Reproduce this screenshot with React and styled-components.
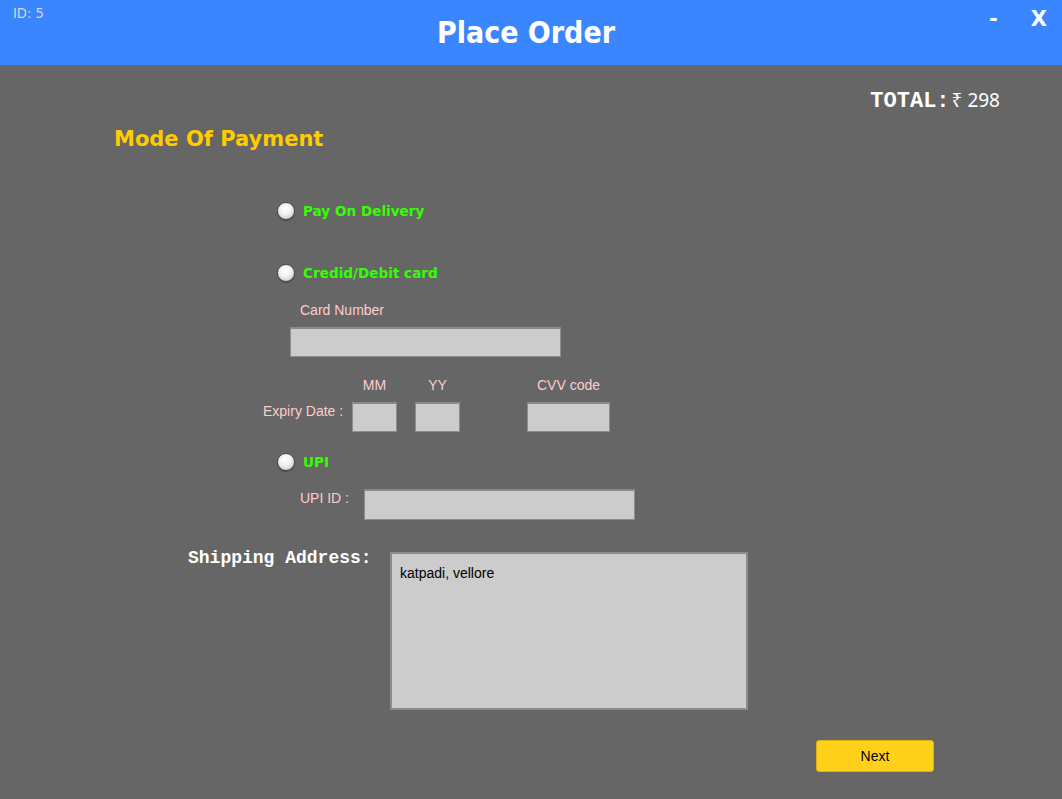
import React, { useState } from 'react'
import styled, { createGlobalStyle } from 'styled-components'

const GlobalStyle = createGlobalStyle`
  html, body { margin: 0; padding: 0; background: #666666; }
  body { font-family: "Liberation Sans", Arial, sans-serif; }
`

const Page = styled.div`
  width: 1062px;
  height: 799px;
  background: #666666;
  display: flex;
  flex-direction: column;
  overflow: hidden;
`

const Header = styled.div`
  height: 65px;
  background: #3a86ff;
  display: grid;
  grid-template-columns: 1fr auto 1fr;
  align-items: start;
`

const UserId = styled.div`
  font-family: "DejaVu Sans Condensed", "DejaVu Sans", sans-serif;
  font-size: 14.5px;
  color: #d6d6d6;
  padding: 5px 0 0 13px;
`

const Title = styled.h1`
  margin: 0;
  padding: 15px 10px 0 0;
  font-family: "DejaVu Sans Condensed", "DejaVu Sans", Verdana, sans-serif;
  font-weight: bold;
  font-size: 30px;
  line-height: 35px;
  color: #ffffff;
`

const WindowControls = styled.div`
  display: flex;
  justify-content: flex-end;
  gap: 33px;
  padding: 7px 15px 0 0;
`

const ControlBtn = styled.span`
  font-family: "DejaVu Sans", sans-serif;
  font-weight: bold;
  font-size: 21px;
  color: #ffffff;
  cursor: pointer;
`

const TotalRow = styled.div`
  display: flex;
  justify-content: flex-end;
  align-items: baseline;
  gap: 2px;
  padding-right: 62px;
  margin-top: 22px;
  height: 22px;
`

const TotalLabel = styled.span`
  font-family: "Liberation Mono", "Courier New", monospace;
  font-weight: bold;
  font-size: 22px;
  color: #ffffff;
`

const TotalValue = styled.span`
  font-family: "Noto Sans", "DejaVu Sans", sans-serif;
  font-size: 19px;
  color: #ffffff;
`

const SectionTitle = styled.h2`
  margin: 18px 0 0 114px;
  font-family: "DejaVu Sans", Verdana, sans-serif;
  font-weight: bold;
  font-size: 21px;
  line-height: 24px;
  color: #ffcc00;
`

const Option = styled.label`
  display: flex;
  align-items: center;
  gap: 8px;
  margin: ${p => p.$top}px 0 0 277px;
  height: 20px;
  cursor: pointer;
`

const Radio = styled.span`
  width: 18px;
  height: 18px;
  border-radius: 50%;
  box-sizing: border-box;
  border: 1px solid #4e4e52;
  background: radial-gradient(circle at 45% 35%, #ffffff 0%, #eef0f3 45%, #b4b8bf 100%);
  box-shadow: 0 1px 1px rgba(0, 0, 0, 0.3);
`

const OptionText = styled.span`
  font-family: "DejaVu Sans", Tahoma, sans-serif;
  font-weight: bold;
  font-size: 13.6px;
  color: #33ff00;
`

const FieldLabel = styled.span`
  font-family: "Liberation Sans", Arial, sans-serif;
  font-size: 14px;
  line-height: 16px;
  color: #ffcccc;
  white-space: nowrap;
`

const CardBlock = styled.div`
  display: flex;
  flex-direction: column;
  align-items: flex-start;
  gap: 9px;
  margin: 19px 0 0 290px;
  & > span { margin-left: 10px; }
`

const TextInput = styled.input`
  width: ${p => p.$w}px;
  height: ${p => p.$h || 30}px;
  box-sizing: border-box;
  background: #cccccc;
  border: 1px solid #8e8e8e;
  border-top: 2px solid #8a8a8a;
  padding: 0 6px;
  font-family: "Liberation Sans", Arial, sans-serif;
  font-size: 14px;
  outline: none;
`

const ExpiryGrid = styled.div`
  display: grid;
  grid-template-columns: 89px 45px 18px 45px 67px 83px;
  grid-template-rows: 16px 30px;
  row-gap: 9px;
  justify-content: start;
  margin: 20px 0 0 263px;
`

const Cell = styled.div`
  grid-column: ${p => p.$col};
  grid-row: ${p => p.$row};
  display: flex;
  justify-content: ${p => (p.$start ? 'flex-start' : 'center')};
  align-items: flex-start;
  padding-top: ${p => p.$pt || 0}px;
`

const UpiRow = styled.div`
  display: flex;
  align-items: flex-start;
  gap: 15px;
  margin: 17px 0 0 300px;
  & > span { padding-top: 1px; }
`

const AddressRow = styled.div`
  display: flex;
  align-items: flex-start;
  margin: 32px 0 0 188px;
`

const AddressLabel = styled.span`
  width: 202px;
  font-family: "Liberation Mono", "Courier New", monospace;
  font-weight: bold;
  font-size: 18px;
  line-height: 16px;
  color: #ffffff;
  margin-top: -2px;
`

const AddressBox = styled.textarea`
  width: 358px;
  height: 158px;
  box-sizing: border-box;
  background: #cccccc;
  border: 2px solid #8b8b93;
  padding: 11px 8px;
  resize: none;
  font-family: "Liberation Sans", Arial, sans-serif;
  font-size: 14px;
  color: #000000;
  outline: none;
`

const Footer = styled.div`
  display: flex;
  justify-content: flex-end;
  padding-right: 128px;
  margin-top: 30px;
`

const NextButton = styled.button`
  width: 118px;
  height: 32px;
  background: #ffd11a;
  border: 1px solid #d9b20e;
  border-radius: 3px;
  font-family: "Liberation Sans", Arial, sans-serif;
  font-size: 14px;
  color: #000000;
  cursor: pointer;
`

export default function App() {
  const [mode, setMode] = useState(null)
  const [address, setAddress] = useState('katpadi, vellore')
  return (
    <Page>
      <GlobalStyle />
      <Header>
        <UserId>ID: 5</UserId>
        <Title>Place Order</Title>
        <WindowControls>
          <ControlBtn>-</ControlBtn>
          <ControlBtn>X</ControlBtn>
        </WindowControls>
      </Header>

      <TotalRow>
        <TotalLabel>TOTAL:</TotalLabel>
        <TotalValue>₹ 298</TotalValue>
      </TotalRow>

      <SectionTitle>Mode Of Payment</SectionTitle>

      <Option $top={50} onClick={() => setMode('cod')}>
        <Radio />
        <OptionText>Pay On Delivery</OptionText>
      </Option>

      <Option $top={42} onClick={() => setMode('card')}>
        <Radio />
        <OptionText>Credid/Debit card</OptionText>
      </Option>

      <CardBlock>
        <FieldLabel>Card Number</FieldLabel>
        <TextInput $w={271} />
      </CardBlock>

      <ExpiryGrid>
        <Cell $col={2} $row={1}><FieldLabel>MM</FieldLabel></Cell>
        <Cell $col={4} $row={1}><FieldLabel>YY</FieldLabel></Cell>
        <Cell $col={6} $row={1}><FieldLabel>CVV code</FieldLabel></Cell>
        <Cell $col={1} $row={2} $start $pt={1}><FieldLabel>Expiry Date :</FieldLabel></Cell>
        <Cell $col={2} $row={2}><TextInput $w={45} /></Cell>
        <Cell $col={4} $row={2}><TextInput $w={45} /></Cell>
        <Cell $col={6} $row={2}><TextInput $w={83} /></Cell>
      </ExpiryGrid>

      <Option $top={20} onClick={() => setMode('upi')}>
        <Radio />
        <OptionText>UPI</OptionText>
      </Option>

      <UpiRow>
        <FieldLabel>UPI ID :</FieldLabel>
        <TextInput $w={271} $h={31} />
      </UpiRow>

      <AddressRow>
        <AddressLabel>Shipping Address:</AddressLabel>
        <AddressBox value={address} onChange={e => setAddress(e.target.value)} />
      </AddressRow>

      <Footer>
        <NextButton>Next</NextButton>
      </Footer>
    </Page>
  )
}
